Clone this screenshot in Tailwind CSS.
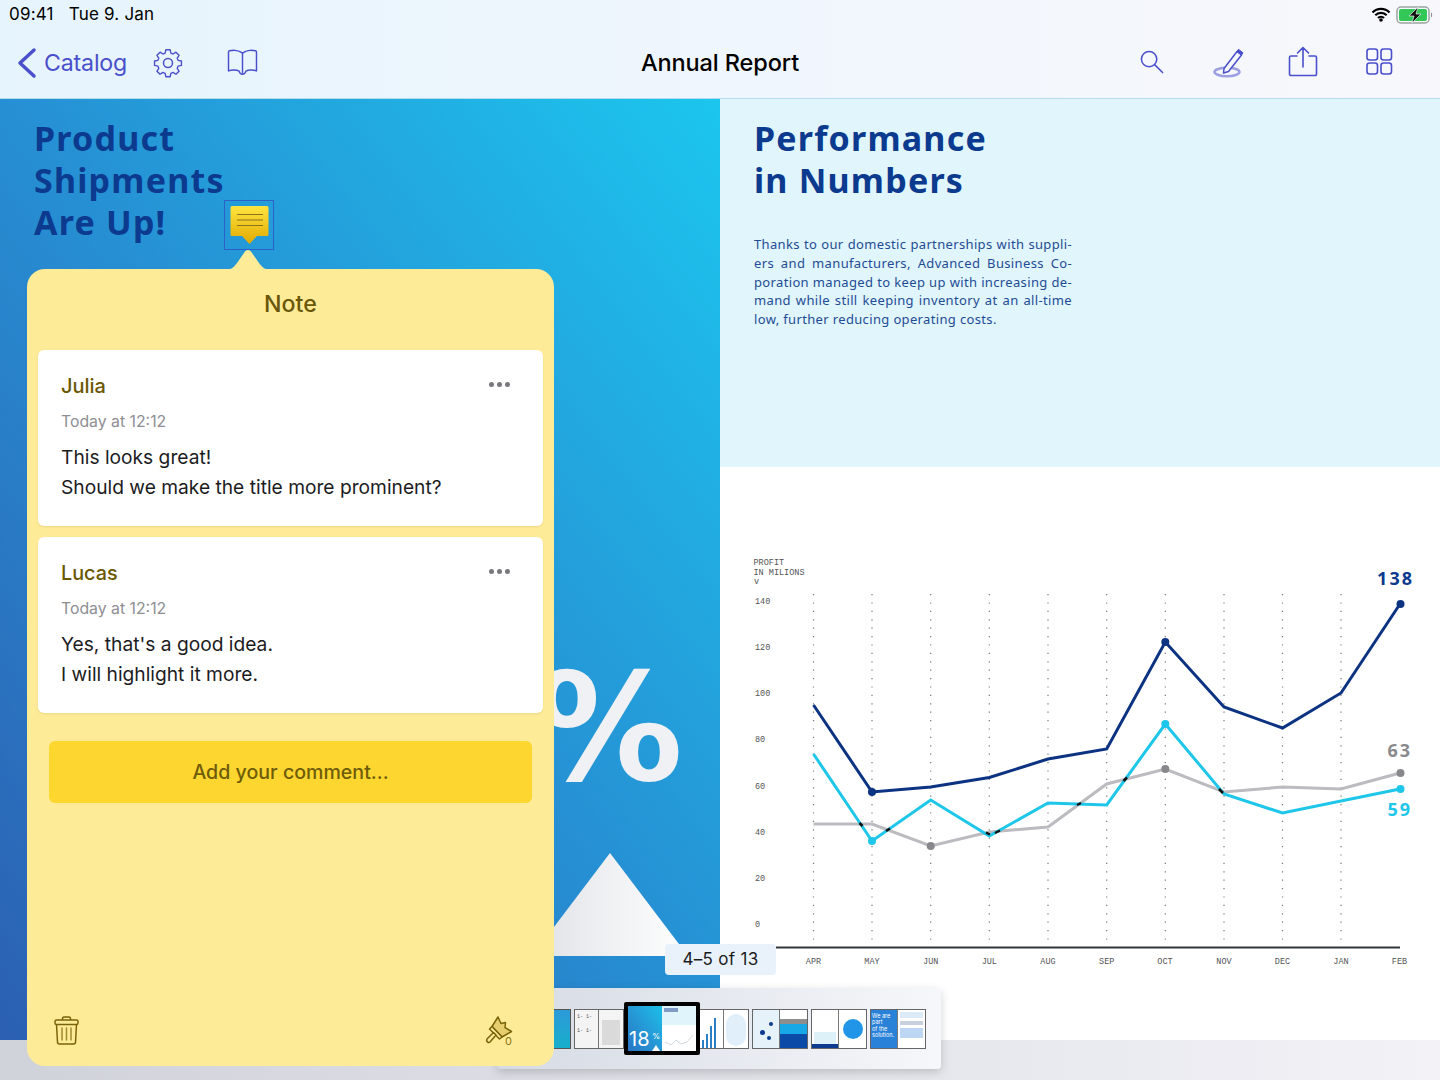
<!DOCTYPE html>
<html lang="en">
  <head>
    <meta charset="UTF-8" />
    <meta name="viewport" content="width=device-width, initial-scale=1.0" />
    <title>Annual Report</title>
    <script src="https://cdn.jsdelivr.net/npm/@tailwindcss/browser@4"></script>
  </head>

  <body class="relative w-[1440px] h-[1080px] overflow-hidden bg-gradient-to-r from-[#d0d2da] to-[#f2f2f7] font-['Inter',sans-serif]">
    <!-- top bars -->
    <header class="h-[99px] bg-gradient-to-r from-[#e6f4fd] to-[#f8f8fc] border-b border-[#b5dcea] flex flex-col">
      <div class="h-[28px] flex items-center justify-between pl-[9px] pr-[6px] pt-[1px] text-[17px] tracking-[0.200px] text-black">
        <div class="flex gap-[15px]"><span>09:41</span><span>Tue 9. Jan</span></div>
        <div class="flex items-center gap-[5px]">
          <svg width="20" height="15" viewBox="0 0 20 15"><path d="M1.5 5.5a12 12 0 0 1 17 0M4.3 8.3a8 8 0 0 1 11.4 0M7 11a4.200 4.200 0 0 1 6 0" fill="none" stroke="#000" stroke-width="2.200"/><circle cx="10" cy="13" r="1.800"/></svg>
          <svg width="38" height="18" viewBox="0 0 38 18"><rect x="1" y="1" width="32" height="16" rx="4" fill="none" stroke="#9aa5a0" stroke-width="1.500"/><rect x="3" y="3" width="28" height="12" rx="2" fill="#33c758"/><path d="M35 6.500c1.500.5 1.500 4.500 0 5z" fill="#8a8a8a"/><path d="M22 1 13 10h5l-2 7 9-9h-5z" fill="#111" stroke="#e8f5f0" stroke-width=".7"/></svg>
        </div>
      </div>
      <div class="flex-1 relative flex items-center justify-between pl-[17px] pr-[47px] text-[#4a4fcb]">
        <div class="flex items-center">
          <svg width="20" height="32" viewBox="0 0 20 32" fill="none" stroke="currentColor" stroke-width="3.500" stroke-linecap="round" stroke-linejoin="round"><path d="M17 3 3 16l14 13"/></svg>
          <span class="ml-[7px] text-[23.200px] tracking-[-0.200px]">Catalog</span>
          <svg class="ml-[26px]" width="30" height="30" viewBox="0 0 24 24" fill="none" stroke="currentColor" stroke-width="1.200" stroke-linejoin="round"><path d="M10.100 1.500h3.800l.6 2.900 1.900.8 2.500-1.600 2.700 2.700-1.600 2.500.8 1.900 2.900.6v3.800l-2.900.6-.8 1.900 1.600 2.500-2.700 2.700-2.500-1.600-1.900.8-.6 2.900h-3.800l-.6-2.900-1.900-.8-2.500 1.600-2.700-2.700 1.600-2.500-.8-1.900-2.900-.6v-3.800l2.900-.6.8-1.900-1.600-2.500 2.700-2.700 2.500 1.600 1.900-.8z" transform="translate(12 12) scale(.92) translate(-12 -13)"/><circle cx="12" cy="12" r="3.600"/></svg>
          <svg class="ml-[44px]" width="31" height="28" viewBox="0 0 32 29" fill="none" stroke="currentColor" stroke-width="1.500" stroke-linejoin="round"><path d="M16 4.500C13 1.500 7 .8 2.500 1.800c-.6.200-1 .7-1 1.300v19.600c3-1.300 8.500-1.300 11 .3 1 4.300 6 4.300 7 0 2.500-1.600 8-1.600 11-.3V3.100c0-.6-.4-1.100-1-1.300C25 .8 19 1.500 16 4.500zM16 4.500V25"/></svg>
        </div>
        <div class="absolute left-0 right-0 text-center text-[23.500px] font-medium text-black tracking-[-0.100px] pointer-events-none">Annual Report</div>
        <div class="flex items-center mb-[3px]">
          <svg width="25" height="26" viewBox="0 0 26 27" fill="none" stroke="currentColor" stroke-width="1.600" stroke-linecap="round"><circle cx="10.500" cy="10.500" r="8"/><path d="m16.500 16.500 8 8"/></svg>
          <svg class="ml-[49px]" width="32" height="32" viewBox="0 0 32 32" fill="none" stroke="currentColor"><ellipse cx="14" cy="26" rx="12.500" ry="4.200" stroke="#9d9fe3" stroke-width="2.500"/><path d="M11 22.500 24 5.500l4.500 3.500-13 16.500-5 1.500z" fill="#f6f6fd" stroke-width="1.500" stroke-linejoin="round"/><path d="m24 5.500 1.500-2.200 4.500 3.500-1.500 2.200z" fill="currentColor"/></svg>
          <svg class="ml-[43px]" width="30" height="31" viewBox="0 0 30 31" fill="none" stroke="currentColor" stroke-width="1.600" stroke-linecap="round" stroke-linejoin="round"><path d="M9 10H3a1.500 1.500 0 0 0-1.500 1.500v16.500A1.500 1.500 0 0 0 3 29.500h24a1.500 1.500 0 0 0 1.500-1.500V11.500A1.500 1.500 0 0 0 27 10h-6M15 21V2M9.500 7 15 1.500 20.500 7"/></svg>
          <svg class="ml-[48px]" width="27" height="27" viewBox="0 0 27 27" fill="none" stroke="currentColor" stroke-width="1.600"><rect x="1" y="1" width="10.500" height="11" rx="2.500"/><rect x="15" y="1" width="10.500" height="11" rx="2.500"/><rect x="1" y="15" width="10.500" height="11" rx="2.500"/><rect x="15" y="15" width="10.500" height="11" rx="2.500"/></svg>
        </div>
      </div>
    </header>

    <!-- document spread -->
    <main class="grid grid-cols-2 h-[941px]">
      <section class="relative overflow-hidden bg-gradient-to-tr from-[#2b5fb2] via-[#268fd3] to-[#1bc6ee] pl-[34px] pt-[18px]">
        <h1 class="font-['Noto_Sans',sans-serif] font-bold text-[34px] leading-[42px] tracking-[1.200px] text-[#0c3a8e]">Product<br />Shipments<br />Are Up!</h1>
        <div class="absolute right-[37px] top-[529px] font-['DejaVu_Sans',sans-serif] font-bold text-[150px] leading-[200px] text-[#eff1f5]">18%</div>
        <svg class="absolute left-[500px] top-[754px]" width="220" height="103" viewBox="0 0 220 103">
          <defs><linearGradient id="tri" x1="0" x2="1"><stop offset="0" stop-color="#dfe2e6" /><stop offset="1" stop-color="#ffffff" /></linearGradient></defs>
          <path d="M110 0 188 103H32z" fill="url(#tri)" />
        </svg>
      </section>

      <section class="flex flex-col bg-white">
        <div class="h-[368px] bg-[#e0f5fc] pl-[34px] pt-[18px]">
          <h2 class="font-['Noto_Sans',sans-serif] font-bold text-[34px] leading-[42px] tracking-[1.200px] text-[#0c3a8e]">Performance<br />in Numbers</h2>
          <div class="mt-[34px] w-[318px] whitespace-nowrap font-['Noto_Sans',sans-serif] text-[13px] leading-[18.800px] tracking-[0.350px] text-[#1f4c94]">
            <p class="[text-align-last:justify]">Thanks to our domestic partnerships with suppli-</p>
            <p class="[text-align-last:justify]">ers and manufacturers, Advanced Business Co-</p>
            <p class="[text-align-last:justify]">poration managed to keep up with increasing de-</p>
            <p class="[text-align-last:justify]">mand while still keeping inventory at an all-time</p>
            <p>low, further reducing operating costs.</p>
          </div>
        </div>
        <svg class="block flex-1" width="720" height="573" viewBox="720 467 720 573" font-family="'Liberation Mono', monospace">
          <g stroke="#777" stroke-width="1.200" stroke-dasharray="1.200 7.200">
            <path d="M813.500 594V945M872 594V945M930.700 594V945M989.300 594V945M1048 594V945M1106.700 594V945M1165.300 594V945M1224 594V945M1282.500 594V945M1341 594V945" />
          </g>
          <path d="M776 947.500H1400" stroke="#33363c" stroke-width="1.800" />
          <g fill="#555" font-size="8.500">
            <text x="753.500" y="565">PROFIT</text>
            <text x="753.500" y="575">IN MILIONS</text>
            <text x="754" y="584">v</text>
          </g>
          <g fill="#555" font-size="8.500">
            <text x="755" y="604">140</text><text x="755" y="650">120</text><text x="755" y="696">100</text><text x="755" y="742">80</text><text x="755" y="789">60</text><text x="755" y="835">40</text><text x="755" y="881">20</text><text x="755" y="927">0</text>
            <g text-anchor="middle">
              <text x="813.500" y="964">APR</text><text x="872" y="964">MAY</text><text x="930.700" y="964">JUN</text><text x="989.300" y="964">JUL</text><text x="1048" y="964">AUG</text><text x="1106.700" y="964">SEP</text><text x="1165" y="964">OCT</text><text x="1224" y="964">NOV</text><text x="1282.500" y="964">DEC</text><text x="1341" y="964">JAN</text><text x="1399.500" y="964">FEB</text>
            </g>
          </g>
          <polyline fill="none" stroke="#bcbcc0" stroke-width="3" points="813.500,824 872,824 930.700,846 989.300,832 1048,827 1106.700,784 1165.300,769 1224,792 1282.500,787 1341,789 1400,773" />
          <polyline fill="none" stroke="#1ec6ea" stroke-width="3" points="813.500,754 872,841 930.700,800 989.300,836 1048,803 1106.700,805 1165.300,724 1224,794 1282.500,813 1341,801 1400,789" />
          <polyline fill="none" stroke="#0c3282" stroke-width="3" points="813.500,705 872,792 930.700,787 989.300,777.500 1048,759 1106.700,749 1165.300,642 1224,707 1282.500,728 1341,693 1400,604" />
          <!-- dark overlap marks where cyan crosses gray -->
          <g stroke="#111" stroke-width="2.500">
            <path d="M859.500 823 862.500 826M886 831 890 828.500M986 832.500 990 834.500M995 833 1000 830.500M1077 805 1081 803M1123.500 781 1127 777.500M1219 789 1223 793" />
          </g>
          <g fill="#0c3282"><circle cx="872" cy="792" r="4" /><circle cx="1165.300" cy="642" r="4" /><circle cx="1400.500" cy="604" r="4" /></g>
          <g fill="#1ec6ea"><circle cx="872" cy="841" r="4" /><circle cx="1165.300" cy="724" r="4" /><circle cx="1400.500" cy="789" r="4" /></g>
          <g fill="#87878c"><circle cx="930.700" cy="846" r="4" /><circle cx="1165.300" cy="769" r="4" /><circle cx="1400.500" cy="773" r="4" /></g>
          <g font-family="'Noto Sans', sans-serif" font-weight="700" font-size="18" letter-spacing="2" text-anchor="end">
            <text x="1414" y="585" fill="#0c3a8e">138</text>
            <text x="1412" y="757" fill="#8a8a8e">63</text>
            <text x="1412" y="816" fill="#1ec6ea">59</text>
          </g>
        </svg>
      </section>
    </main>

    <!-- page badge -->
    <div class="absolute left-[665px] top-[944px] w-[111px] h-[31px] rounded-[4px] bg-[#e9f2fa] flex items-center justify-center text-[17px] tracking-[0.300px] text-[#1c1c1e]">4–5 of 13</div>

    <!-- thumbnail strip -->
    <div class="absolute left-[497px] top-[988px] w-[444px] h-[81px] rounded-[4px] bg-gradient-to-r from-[#d5dbe4] to-[#f6f7fa] shadow-[0_3px_10px_rgba(0,0,0,0.18)] flex items-center pl-[47px]">
      <div class="flex items-center">
        <div class="w-[27px] h-[40px] border border-[#555] border-l-0 bg-gradient-to-b from-[#2b9ad8] to-[#16aecb]"></div>
        <div class="ml-[3px] w-[50px] h-[40px] border border-[#666] grid grid-cols-2 bg-[#f4f4f4]">
          <div class="border-r border-[#777] text-[5px] leading-[7px] text-[#555] font-['Liberation_Mono',monospace] pl-[2px] pt-[4px]">1- 1-<br /><br />1- 1-</div>
          <div class="m-[3px] mt-[10px] bg-[#dadada]"></div>
        </div>
        <div class="relative z-10 w-[76px] h-[53px] border-[4px] border-black rounded-[2px] grid grid-cols-2 bg-white">
          <div class="relative bg-gradient-to-tr from-[#2a74c4] to-[#1bbfe8]">
            <span class="absolute left-[1px] bottom-0 text-[20px] text-white leading-[24px]">18</span>
            <span class="absolute right-[2px] bottom-[10px] text-[8px] text-white leading-[10px]">%</span>
            <div class="absolute right-[2px] bottom-0 w-0 h-0 border-x-[4px] border-x-transparent border-b-[6px] border-b-white"></div>
          </div>
          <div class="flex flex-col">
            <div class="h-[19px] bg-[#dff4fb] p-[2px]"><div class="w-[14px] h-[4px] bg-[#7f9cc9]"></div></div>
            <svg class="flex-1" viewBox="0 0 34 26"><path d="M3 17 9 20 14 15 19 19 25 17 31 10" fill="none" stroke="#c5ced6" stroke-width=".8" /></svg>
          </div>
        </div>
        <div class="w-[49px] h-[40px] border border-[#666] border-l-0 grid grid-cols-2 bg-white">
          <div class="border-r border-[#777] flex items-end gap-[2px] px-[2px]"><i class="block w-[2px] h-[8px] bg-[#2b7fc4]"></i><i class="block w-[2px] h-[14px] bg-[#2b7fc4]"></i><i class="block w-[2px] h-[22px] bg-[#2b7fc4]"></i><i class="block w-[2px] h-[30px] bg-[#2b7fc4]"></i></div>
          <div class="m-[2px] mt-[4px] rounded-full bg-[#e1effa]"></div>
        </div>
        <div class="ml-[3px] w-[56px] h-[40px] border border-[#666] grid grid-cols-2 bg-white">
          <div class="relative border-r border-[#777] bg-[#e6f2fa]">
            <i class="absolute left-[7px] top-[20px] w-[5px] h-[5px] rounded-full bg-[#0c3a8e]"></i><i class="absolute left-[16px] top-[12px] w-[4px] h-[4px] rounded-full bg-[#0c3a8e]"></i><i class="absolute left-[14px] top-[26px] w-[4px] h-[4px] rounded-full bg-[#0c3a8e]"></i>
          </div>
          <div class="flex flex-col justify-end"><div class="h-[5px] bg-[#8e8e8e]"></div><div class="h-[10px] bg-[#18a8e8]"></div><div class="h-[14px] bg-[#0c4aa8]"></div></div>
        </div>
        <div class="ml-[3px] w-[56px] h-[40px] border border-[#666] grid grid-cols-2 bg-white">
          <div class="flex flex-col justify-end border-r border-[#777]"><div class="mx-[2px] h-[12px] bg-[#ddf2f8]"></div><div class="h-[4px] bg-[#0c3a8e]"></div></div>
          <div class="flex items-center justify-center"><div class="w-[20px] h-[20px] rounded-full bg-[#2196e8]"></div></div>
        </div>
        <div class="ml-[3px] w-[56px] h-[40px] border border-[#666] grid grid-cols-2 bg-white">
          <div class="bg-[#2a82d8] border-r border-[#777] px-[1px] pt-[3px] text-[5.500px] leading-[6.500px] text-white">We are<br />part<br />of the<br />solution.</div>
          <div class="p-[2px] flex flex-col gap-[3px]"><div class="h-[6px] bg-[#dcebf8]"></div><div class="h-[4px] bg-[#c7d0dc]"></div><div class="h-[10px] bg-[#bcd6f4]"></div></div>
        </div>
      </div>
    </div>

    <!-- selected note marker -->
    <div class="absolute left-[224px] top-[200px] w-[50px] h-[50px] border-[1.500px] border-[#2c62c8] flex justify-center pt-[4px]">
      <svg width="39" height="40" viewBox="0 0 39 40">
        <defs><linearGradient id="marker" x1="0" x2="0" y1="0" y2="1"><stop offset="0" stop-color="#ffe43f" /><stop offset="1" stop-color="#e0aa00" /></linearGradient></defs>
        <path d="M2 1h35a1.500 1.500 0 0 1 1.500 1.500v27a1.500 1.500 0 0 1-1.500 1.500H27l-7.500 8-7.500-8H2A1.500 1.500 0 0 1 .5 29.500v-27A1.500 1.500 0 0 1 2 1z" fill="url(#marker)" />
        <path d="M7 9.500h26M7 15h26M7 20.500h26" stroke="#8a7420" stroke-width="1.200" />
      </svg>
    </div>

    <!-- note popover -->
    <aside class="absolute left-[27px] top-[269px] w-[527px] h-[797px] rounded-[18px] bg-[#feeb98] flex flex-col px-[11px]">
      <svg class="absolute left-[196px] top-[-19px]" width="50" height="20" viewBox="0 0 50 20"><path d="M0 20c8 0 10-2 14-7l7-10c2-4 6-4 8 0l7 10c4 5 6 7 14 7z" fill="#feeb98" /></svg>
      <h3 class="h-[81px] pt-[19px] text-center text-[23.200px] leading-[33px] font-medium text-[#695609]">Note</h3>

      <article class="relative h-[176px] rounded-[6px] bg-white shadow-[0_1px_2px_rgba(140,110,0,0.15)] pl-[23px] pt-[24px]">
        <div class="text-[20px] leading-[24px] font-medium text-[#6b5700]">Julia</div>
        <div class="mt-[13px] text-[15.800px] leading-[22px] text-[#8e8e93]">Today at 12:12</div>
        <p class="mt-[10px] text-[19.200px] leading-[29.500px] text-[#1c1c1e]">This looks great!<br />Should we make the title more prominent?</p>
        <div class="absolute right-[33px] top-[32px] flex gap-[3px]"><i class="block w-[5px] h-[5px] rounded-full bg-[#77777c]"></i><i class="block w-[5px] h-[5px] rounded-full bg-[#77777c]"></i><i class="block w-[5px] h-[5px] rounded-full bg-[#77777c]"></i></div>
      </article>

      <article class="relative mt-[11px] h-[176px] rounded-[6px] bg-white shadow-[0_1px_2px_rgba(140,110,0,0.15)] pl-[23px] pt-[24px]">
        <div class="text-[19.800px] leading-[24px] font-medium text-[#6b5700]">Lucas</div>
        <div class="mt-[13px] text-[15.800px] leading-[22px] text-[#8e8e93]">Today at 12:12</div>
        <p class="mt-[10px] text-[19.200px] leading-[29.500px] text-[#1c1c1e]">Yes, that's a good idea.<br />I will highlight it more.</p>
        <div class="absolute right-[33px] top-[32px] flex gap-[3px]"><i class="block w-[5px] h-[5px] rounded-full bg-[#77777c]"></i><i class="block w-[5px] h-[5px] rounded-full bg-[#77777c]"></i><i class="block w-[5px] h-[5px] rounded-full bg-[#77777c]"></i></div>
      </article>

      <button class="mt-[28px] mx-[11px] h-[62px] pt-[2px] rounded-[6px] bg-[#fdd730] text-[19.600px] font-medium text-[#6f5c09]">Add your comment...</button>

      <div class="mt-auto pb-[21px] pl-[16px] pr-[29px] flex items-end justify-between">
        <svg width="25" height="29" viewBox="0 0 25 29" fill="none" stroke="#7a6208" stroke-width="1.500" stroke-linejoin="round"><path d="M8.500 4V2.500a1.500 1.500 0 0 1 1.500-1.500h5a1.500 1.500 0 0 1 1.500 1.500V4" /><rect x="1" y="4" width="23" height="4.500" rx="1.500" /><path d="M2.500 8.500 3.500 26a2 2 0 0 0 2 2h14a2 2 0 0 0 2-2l1-17.500" /><path d="M8 12v12M12.500 12v12M17 12v12" stroke="#a08a30" stroke-linecap="round" /></svg>
        <div class="relative w-[30px] h-[31px]">
          <svg width="30" height="31" viewBox="0 0 30 31" fill="none" stroke="#7a6208" stroke-width="1.500" stroke-linejoin="round"><path d="M14 3 17 9.500 21.500 8.500 21 13.500 27.500 17.500 18 23 8 12.500z" fill="#e6cd6d" /><path d="M8 12.500 18 23 15.500 25 5.500 15z" fill="#feeb98" /><path d="M9.500 18.500 12 21 6 28c-1.500 1.500-4.300-.8-3-3z" fill="#feeb98" /></svg>
          <span class="absolute right-[2px] bottom-[-2px] text-[11px] leading-[12px] text-[#8a7420]">0</span>
        </div>
      </div>
    </aside>
  </body>
</html>
